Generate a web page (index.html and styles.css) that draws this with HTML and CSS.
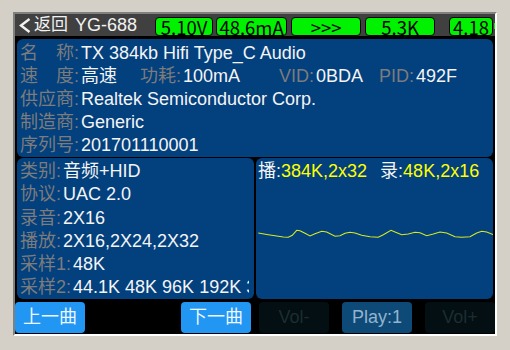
FILE: index.html
```html
<!DOCTYPE html>
<html>
<head>
<meta charset="utf-8">
<link rel="stylesheet" href="styles.css">
</head>
<body>
<div class="frame">
  <div class="screen">
    <div class="titlebar">
      <svg class="back" width="12" height="16" viewBox="0 0 12 16"><polyline points="10.5,1 2,7.5 10.5,14" fill="none" stroke="#f2f2f2" stroke-width="2.4"/></svg>
      <span class="ttl">返回</span>
      <span class="model">YG-688</span>
      <span class="badge b1">5.10V</span>
      <span class="badge b2">48.6mA</span>
      <span class="badge b3">&gt;&gt;&gt;</span>
      <span class="badge b4">5.3K</span>
      <span class="badge bat">4.18</span>
    </div>

    <div class="panel info">
      <div class="row"><span class="lbl j"><i>名</i><i>称</i></span><span class="colon">:</span><span class="val">TX 384kb Hifi Type_C Audio</span></div>
      <div class="row">
        <span class="grp g1"><span class="lbl j"><i>速</i><i>度</i></span><span class="colon">:</span><span class="val">高速</span></span>
        <span class="grp g2"><span class="lbl">功耗</span><span class="colon">:</span><span class="val">100mA</span></span>
        <span class="grp g3"><span class="lbl">VID</span><span class="colon">:</span><span class="val">0BDA</span></span>
        <span class="grp"><span class="lbl">PID</span><span class="colon">:</span><span class="val">492F</span></span>
      </div>
      <div class="row"><span class="lbl">供应商</span><span class="colon">:</span><span class="val">Realtek Semiconductor Corp.</span></div>
      <div class="row"><span class="lbl">制造商</span><span class="colon">:</span><span class="val">Generic</span></div>
      <div class="row"><span class="lbl">序列号</span><span class="colon">:</span><span class="val">201701110001</span></div>
    </div>

    <div class="lower">
      <div class="panel spec">
        <div class="row"><span class="lbl">类别</span><span class="colon">:</span><span class="val">音频+HID</span></div>
        <div class="row"><span class="lbl">协议</span><span class="colon">:</span><span class="val">UAC 2.0</span></div>
        <div class="row"><span class="lbl">录音</span><span class="colon">:</span><span class="val">2X16</span></div>
        <div class="row"><span class="lbl">播放</span><span class="colon">:</span><span class="val">2X16,2X24,2X32</span></div>
        <div class="row"><span class="lbl">采样1</span><span class="colon">:</span><span class="val">48K</span></div>
        <div class="row"><span class="lbl">采样2</span><span class="colon">:</span><span class="val">44.1K 48K 96K 192K 384K</span></div>
      </div>
      <div class="panel scope">
        <div class="srow"><span class="w">播:</span><span class="y">384K,2x32</span><span class="w sp">录:</span><span class="y">48K,2x16</span></div>
        <svg class="wave" width="237" height="110" viewBox="0 0 237 110">
          <polyline fill="none" stroke="#d9ea1e" stroke-width="1.1" points="2.3,51 12.3,52.7 19,53.7 27.3,55 32.3,55.3 36.3,53.3 40.7,48.3 44,48.7 49,51.3 54,54 59,51.7 65.7,49.3 70.7,50 79,54.3 84,53.7 89,51.3 94,50.3 99,51 105.7,53.3 114,54.7 122.3,55.3 127.3,52.7 135,48.3 139,50 145.7,52.7 152.3,52 159,50.3 164,50.7 170.7,53.7 177.3,52 184,50 190.7,51 199,54.7 205.7,55.3 214,54.7 220.7,51 225.7,49.3 230.7,50 237,52.5"/>
        </svg>
      </div>
    </div>

    <div class="buttons">
      <span class="btn blue">上一曲</span>
      <span class="btn hidden"></span>
      <span class="btn blue">下一曲</span>
      <span class="btn dim r">Vol-</span>
      <span class="btn play">Play:1</span>
      <span class="btn dim">Vol+</span>
    </div>
  </div>
</div>
</body>
</html>
```

FILE: styles.css
```css
html, body {
  margin: 0;
  padding: 0;
}
body {
  background: #d4d0c8;
  width: 510px;
  height: 350px;
  overflow: hidden;
  font-family: "Liberation Sans", "Noto Sans CJK SC", sans-serif;
}
.frame {
  margin: 12px 0 0 13px;
  width: 480px;
  height: 320px;
  border-style: solid;
  border-width: 2px;
  border-color: #808080 #ffffff #ffffff #808080;
}
.screen {
  width: 480px;
  height: 320px;
  background: #000;
  overflow: hidden;
  display: flex;
  flex-direction: column;
}
.titlebar {
  height: 22px;
  background: #404040;
  display: flex;
  align-items: flex-start;
  color: #f2f2f2;
  font-size: 18px;
  line-height: 22px;
  flex: none;
}
.back {
  margin: 4px 0 0 4px;
}
.ttl {
  margin-left: 3px;
  font-size: 17px;
}
.model {
  margin-left: 7px;
  font-size: 18px;
}
.badge {
  position: relative;
  box-sizing: border-box;
  height: 19px;
  margin-top: 3px;
  background: #00f200;
  border: 1.5px solid #000;
  border-radius: 4px;
  color: #000;
  font-family: "Noto Sans CJK SC", sans-serif;
  font-size: 18.5px;
  line-height: 16px;
  text-align: center;
  display: flex;
  align-items: center;
  justify-content: center;
}
.b1 { width: 58px; margin-left: 18px; }
.b2 { width: 71px; margin-left: 3px; }
.b3 { width: 70px; margin-left: 4px; }
.b4 { width: 70px; margin-left: 4px; }
.bat { width: 44px; margin-left: 14px; }
.bat::after {
  content: "";
  position: absolute;
  right: -3.5px;
  top: 5px;
  width: 2px;
  height: 6px;
  background: #00f200;
}
.panel {
  background: #03407e;
  border-radius: 6px;
  overflow: hidden;
  box-sizing: border-box;
}
.info {
  margin: 3px 2px 0 2px;
  height: 118px;
  padding: 3px 0 0 3px;
  flex: none;
}
.row {
  display: flex;
  white-space: nowrap;
  overflow: hidden;
  height: 23px;
  line-height: 23px;
  font-size: 18px;
}
.lbl {
  color: #7c7c7c;
}
.lbl i {
  font-style: normal;
}
.lbl.j {
  display: inline-flex;
  justify-content: space-between;
  width: 54px;
}
.colon {
  color: #7c7c7c;
  margin-right: 2px;
}
.val {
  color: #f4f4f4;
}
.grp {
  display: flex;
}
.g1 { width: 120px; }
.g2 { width: 139px; }
.g3 { width: 100px; }
.lower {
  display: flex;
  gap: 2px;
  margin: 1px 2px 0 2px;
  height: 141px;
  flex: none;
}
.spec {
  width: 237px;
  padding: 2px 5px 0 3px;
}
.spec .row {
  height: 23.3px;
  line-height: 23.3px;
}
.scope {
  width: 237px;
  padding: 2px 0 0 2px;
  position: relative;
}
.srow {
  font-size: 18px;
  line-height: 23px;
  white-space: nowrap;
}
.w { color: #f4f4f4; }
.y { color: #ffff00; }
.sp { margin-left: 13px; }
.wave {
  display: block;
  margin: -1px 0 0 -2px;
}
.buttons {
  display: flex;
  gap: 13px;
  margin-top: 3px;
  height: 31px;
  flex: none;
}
.btn {
  width: 70px;
  height: 31px;
  border-radius: 4px;
  font-size: 18px;
  line-height: 31px;
  text-align: center;
  box-sizing: border-box;
}
.blue {
  background: #2196f3;
  color: #eef6ff;
}
.hidden {
  visibility: hidden;
}
.dim {
  background: #030f12;
  color: #1c2d31;
}
.r {
  margin-left: -5px;
}
.play {
  background: #0e4a78;
  color: #93b4cc;
}
```
